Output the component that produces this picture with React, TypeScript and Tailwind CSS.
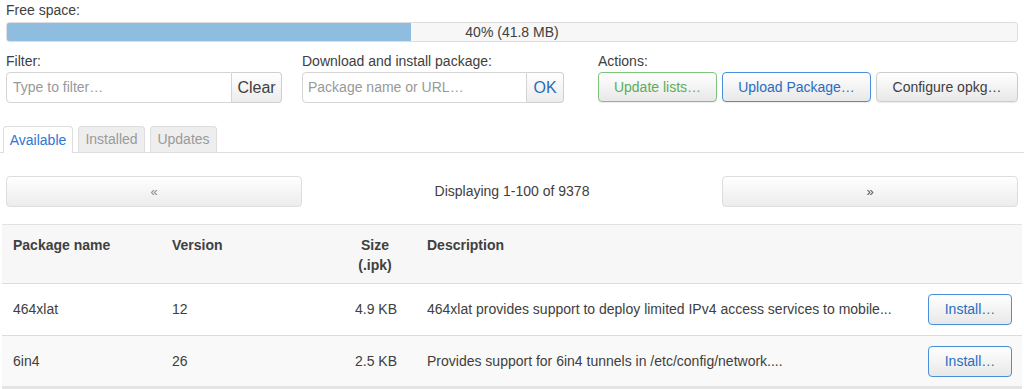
import React from "react";

const btn =
  "h-[30px] rounded-[4px] border bg-gradient-to-b from-white to-[#e8e8e8] text-[14px] leading-none shadow-[0_1px_1px_rgba(0,0,0,0.08)]";

interface Pkg {
  name: string;
  version: string;
  size: string;
  description: string;
}

const packages: Pkg[] = [
  {
    name: "464xlat",
    version: "12",
    size: "4.9 KB",
    description:
      "464xlat provides support to deploy limited IPv4 access services to mobile...",
  },
  {
    name: "6in4",
    version: "26",
    size: "2.5 KB",
    description: "Provides support for 6in4 tunnels in /etc/config/network....",
  },
];

export default function App() {
  return (
    <div className="w-[1024px] h-[389px] overflow-hidden bg-white text-[14px] text-[#404040] font-['Liberation_Sans',Arial,sans-serif]">
      <div className="px-[6px]">
        <div className="pt-[1px] leading-[18px]">Free space:</div>
        <div className="relative mt-[3px] h-[20px] rounded-[3px] border border-[#dedede] bg-[#f7f7f7] overflow-hidden">
          <div className="h-full w-[40%] bg-[#8fbde0]" />
          <div className="absolute inset-0 flex items-center justify-center text-[14px] text-[#404040]">
            40% (41.8 MB)
          </div>
        </div>

        <div className="mt-[11px] flex">
          <div className="w-[276px]">
            <div className="leading-[17px]">Filter:</div>
            <div className="mt-[2px] flex h-[31px]">
              <div className="flex-1 flex items-center rounded-l-[4px] border border-[#d4d4d4] px-[6px] text-[#999]">
                Type to filter…
              </div>
              <button className="w-[50px] rounded-r-[4px] border border-l-0 border-[#cfcfcf] bg-gradient-to-b from-white to-[#ececec] text-[16px] text-[#404040]">
                Clear
              </button>
            </div>
          </div>
          <div className="ml-[20px] w-[262px]">
            <div className="leading-[17px]">Download and install package:</div>
            <div className="mt-[2px] flex h-[31px]">
              <div className="flex-1 flex items-center rounded-l-[4px] border border-[#d4d4d4] px-[5px] text-[#999]">
                Package name or URL…
              </div>
              <button className="w-[37px] rounded-r-[4px] border border-l-0 border-[#cfcfcf] bg-gradient-to-b from-white to-[#ececec] text-[16px] text-[#2a6cc0]">
                OK
              </button>
            </div>
          </div>
          <div className="ml-[34px]">
            <div className="leading-[17px]">Actions:</div>
            <div className="mt-[2px] flex gap-[5px]">
              <button className={`${btn} w-[119px] border-[#7cc47c] text-[#5aae5a]`}>
                Update lists…
              </button>
              <button className={`${btn} w-[149px] border-[#4a8fdc] text-[#2a6cc0]`}>
                Upload Package…
              </button>
              <button className={`${btn} w-[142px] border-[#cccccc] text-[#404040]`}>
                Configure opkg…
              </button>
            </div>
          </div>
        </div>
      </div>

      <div className="mt-[23px] flex items-end gap-[5px] border-b border-[#dddddd] pl-[3px] h-[27px]">
        <div className="-mb-px h-[27px] w-[70px] flex items-center justify-center rounded-t-[4px] border border-b-0 border-[#dddddd] bg-white text-[#2f76d2]">
          Available
        </div>
        <div className="h-[26px] w-[67px] flex items-center justify-center rounded-t-[4px] border border-b-0 border-[#dddddd] bg-[#eeeeee] text-[#9a9a9a]">
          Installed
        </div>
        <div className="h-[26px] w-[67px] flex items-center justify-center rounded-t-[4px] border border-b-0 border-[#dddddd] bg-[#eeeeee] text-[#9a9a9a]">
          Updates
        </div>
      </div>

      <div className="mt-[23px] flex items-center px-[6px]">
        <button className="h-[31px] w-[296px] rounded-[4px] border border-[#dddddd] bg-gradient-to-b from-white to-[#ececec] text-[13px] text-[#888]">
          «
        </button>
        <div className="flex-1 text-center">Displaying 1-100 of 9378</div>
        <button className="h-[31px] w-[296px] rounded-[4px] border border-[#dddddd] bg-gradient-to-b from-white to-[#ececec] text-[13px] text-[#555]">
          »
        </button>
      </div>

      <table className="mt-[17px] ml-[2px] w-[1020px] border-collapse">
        <thead>
          <tr className="bg-[#f7f7f7] border-t border-[#e2e2e2] border-b border-b-[#dcdcdc] align-top">
            <th className="h-[59px] w-[159px] pl-[11px] pt-[10px] text-left font-bold text-[#404040]">
              Package name
            </th>
            <th className="w-[150px] pl-[11px] pt-[10px] text-left font-bold text-[#404040]">
              Version
            </th>
            <th className="w-[86px] pr-[0px] pt-[10px] text-right font-bold leading-[20px] text-[#404040]">
              <div className="w-[44px] ml-auto text-center">
                Size
                <br />
                (.ipk)
              </div>
            </th>
            <th className="pl-[30px] pt-[10px] text-left font-bold text-[#404040]">
              Description
            </th>
            <th className="w-[110px]" />
          </tr>
        </thead>
        <tbody>
          {packages.map((p, i) => (
            <tr
              key={p.name}
              className={`h-[52px] border-b ${
                i === packages.length - 1
                  ? "border-b-[3px] border-[#e4e4e4] bg-[#f9f9f9]"
                  : "border-[#dcdcdc] bg-white"
              }`}
            >
              <td className="pl-[11px]">{p.name}</td>
              <td className="pl-[11px]">{p.version}</td>
              <td className="text-right">{p.size}</td>
              <td className="pl-[30px]">{p.description}</td>
              <td className="pr-[10px] text-right">
                <button className="h-[31px] w-[84px] rounded-[4px] border border-[#4a8fdc] bg-gradient-to-b from-white to-[#e8e8e8] text-[14px] text-[#2a6cc0]">
                  Install…
                </button>
              </td>
            </tr>
          ))}
        </tbody>
      </table>
    </div>
  );
}
